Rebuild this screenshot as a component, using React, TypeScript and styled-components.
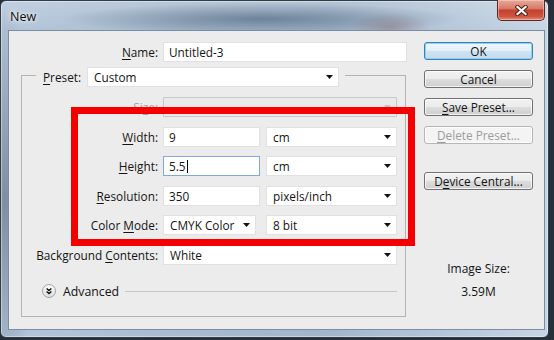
import React from "react";
import styled, { createGlobalStyle } from "styled-components";

const Global = createGlobalStyle`
  html, body { margin: 0; padding: 0; background: #26303b; }
  body {
    width: 554px; height: 340px; overflow: hidden;
    font-family: "Open Sans", "Noto Sans", sans-serif;
    font-size: 11.8px; color: #141414;
  }
`;

const Window = styled.div`
  box-sizing: border-box;
  width: 549px;
  height: 338px;
  border: 1px solid #2f3d4b;
  border-radius: 6px;
  padding: 0 3px 7px 7px;
  display: flex;
  flex-direction: column;
  background:
    radial-gradient(ellipse 200px 16px at 260px 18px, rgba(70, 92, 118, 0.6), transparent),
    radial-gradient(ellipse 40px 14px at 390px 26px, rgba(140, 80, 80, 0.35), transparent),
    radial-gradient(ellipse 30px 200px at 4px 200px, rgba(60, 75, 95, 0.45), transparent),
    linear-gradient(to bottom, rgba(255, 255, 255, 0.18), rgba(255, 255, 255, 0) 30px),
    linear-gradient(to right, #b4c6da, #a7bace 35%, #a2b6cb 60%, #b3c5d8 80%, #c7d5e3);
  box-shadow: inset 0 0 0 1px rgba(255, 255, 255, 0.4);
`;

const TitleBar = styled.div`
  height: 29px;
  display: flex;
  align-items: flex-start;
  justify-content: space-between;
  padding-left: 2px;
`;

const Title = styled.span`
  font-family: "Open Sans", "Noto Sans", sans-serif;
  font-size: 12.5px;
  line-height: 31px;
  color: #0c0c0c;
  text-shadow: 0 0 6px rgba(255, 255, 255, 0.9), 0 0 3px rgba(255, 255, 255, 0.8);
`;

const CloseButton = styled.div`
  box-sizing: border-box;
  width: 48px;
  height: 21px;
  margin-top: -1px;
  border: 1px solid #5d2620;
  border-top: none;
  border-radius: 0 0 5px 5px;
  display: flex;
  align-items: center;
  justify-content: center;
  background: linear-gradient(#e7a999 0%, #d87a6b 42%, #c4412e 52%, #cd5540 82%, #e48f78 100%);
  box-shadow: inset 0 0 0 1px rgba(255, 220, 210, 0.45);
`;

const Client = styled.div`
  position: relative;
  box-sizing: border-box;
  flex: 1;
  border: 1px solid #7b8da2;
  background: #ececec;
  display: flex;
  padding-top: 11px;
`;

const LeftPane = styled.div`
  width: 415px;
  display: flex;
  flex-direction: column;
`;

const RightPane = styled.div`
  width: 109px;
  display: flex;
  flex-direction: column;
`;

const NameRow = styled.div`
  display: grid;
  grid-template-columns: 149px 244px;
  column-gap: 5px;
  height: 20px;
  align-items: center;
`;

const Label = styled.span<{ $disabled?: boolean }>`
  text-align: right;
  white-space: nowrap;
  color: ${(p) => (p.$disabled ? "#a3a3a3" : "#141414")};
`;

const Key = styled.span`
  text-decoration: underline;
  text-underline-offset: 2px;
`;

const TextBox = styled.div<{ $w: number; $focus?: boolean }>`
  box-sizing: border-box;
  width: ${(p) => p.$w}px;
  height: 20px;
  background: #fff;
  border: 1px solid ${(p) => (p.$focus ? "#7fa9d6" : "#e1e1e1")};
  padding-left: 5px;
  display: flex;
  align-items: center;
  white-space: nowrap;
`;

const Caret = styled.span`
  display: inline-block;
  width: 1px;
  height: 13px;
  background: #000;
  margin-left: 1px;
`;

const Select = styled.div<{ $w: number; $disabled?: boolean }>`
  box-sizing: border-box;
  width: ${(p) => p.$w}px;
  height: 20px;
  background: ${(p) => (p.$disabled ? "#eaeaea" : "#fff")};
  border: 1px solid ${(p) => (p.$disabled ? "#c9c9c9" : "#e1e1e1")};
  padding: 0 5px 0 6px;
  display: flex;
  align-items: center;
  justify-content: space-between;
  white-space: nowrap;
`;

const GroupBox = styled.div`
  box-sizing: border-box;
  margin: 13px 0 0 12px;
  width: 385px;
  height: 242px;
  border: 1px solid #b4b4b4;
  display: flex;
  flex-direction: column;
`;

const Legend = styled.div`
  align-self: flex-start;
  margin: -9px 0 0 14px;
  padding: 0 6px 0 7px;
  background: #ececec;
  display: flex;
  align-items: center;
  gap: 5px;
`;

const LegendLabel = styled.span`
  width: 39px;
  white-space: nowrap;
`;

const FieldGrid = styled.div`
  display: grid;
  grid-template-columns: 136px 234px;
  grid-auto-rows: 20px;
  column-gap: 5px;
  row-gap: 9.5px;
  margin-top: 10px;
  align-items: center;
`;

const FieldCell = styled.div`
  display: flex;
  justify-content: space-between;
  align-items: center;
`;

const AdvancedRow = styled.div`
  display: flex;
  align-items: center;
  height: 14px;
  margin: 19.5px 8px 0 20px;
`;

const AdvancedText = styled.span`
  margin-left: 7px;
  font-size: 12.3px;
  white-space: nowrap;
`;

const Rule = styled.div`
  flex: 1;
  height: 1px;
  margin-left: 6px;
  background: #c6c6c6;
`;

const Button = styled.div<{ $default?: boolean; $disabled?: boolean }>`
  box-sizing: border-box;
  height: 18px;
  border-radius: 3px;
  border: 1px solid ${(p) => (p.$default ? "#3c7fb1" : p.$disabled ? "#b3b7ba" : "#707070")};
  display: flex;
  align-items: center;
  justify-content: center;
  white-space: nowrap;
  color: ${(p) => (p.$disabled ? "#9c9c9c" : "#141414")};
  background: ${(p) =>
    p.$default
      ? "linear-gradient(#eef6fc 0%, #e3eff8 50%, #cfe3f2 50%, #c2dbee 100%)"
      : p.$disabled
      ? "#f4f4f4"
      : "linear-gradient(#f2f2f2 0%, #ebebeb 50%, #dddddd 50%, #cfcfcf 100%)"};
  box-shadow: inset 0 0 0 1px ${(p) => (p.$default ? "#8fd3f3" : "rgba(255,255,255,0.75)")};
`;

const ButtonStack = styled.div`
  display: flex;
  flex-direction: column;
  gap: 10px;
`;

const SpacedButton = styled(Button)`
  margin-top: 28px;
`;

const SizeInfo = styled.div`
  margin-top: 67px;
  text-align: center;
  line-height: 23px;
  font-size: 12px;
`;

const Annotation = styled.div`
  position: absolute;
  left: 62px;
  top: 76px;
  width: 344px;
  height: 139px;
  box-sizing: border-box;
  border: 7px solid #f40000;
  pointer-events: none;
`;

const Arrow = () => (
  <svg width="7" height="4" viewBox="0 0 7 4">
    <path d="M0 0H7L3.5 4Z" fill="#111" />
  </svg>
);

const DimArrow = () => (
  <svg width="7" height="4" viewBox="0 0 7 4">
    <path d="M0 0H7L3.5 4Z" fill="#c4c4c4" />
  </svg>
);

const AdvancedIcon = () => (
  <svg width="14" height="14" viewBox="0 0 14 14">
    <defs>
      <linearGradient id="advg" x1="0" y1="0" x2="0" y2="1">
        <stop offset="0" stopColor="#ffffff" />
        <stop offset="1" stopColor="#dcdcdc" />
      </linearGradient>
    </defs>
    <circle cx="7" cy="7" r="6.5" fill="url(#advg)" stroke="#a2a2a2" />
    <path d="M4.6 4.4L7 6.6L9.4 4.4M4.6 7.4L7 9.6L9.4 7.4" fill="none" stroke="#111" strokeWidth="1.3" />
  </svg>
);

const CloseGlyph = () => (
  <svg width="13" height="11" viewBox="0 0 13 11">
    <path d="M2.5 2L10.5 9M10.5 2L2.5 9" stroke="#4a1c16" strokeWidth="4.2" strokeLinecap="square" />
    <path d="M2.5 2L10.5 9M10.5 2L2.5 9" stroke="#ffffff" strokeWidth="2.3" strokeLinecap="square" />
  </svg>
);

export default function App() {
  return (
    <>
      <Global />
      <Window>
        <TitleBar>
          <Title>New</Title>
          <CloseButton>
            <CloseGlyph />
          </CloseButton>
        </TitleBar>
        <Client>
          <LeftPane>
            <NameRow>
              <Label>
                <Key>N</Key>ame:
              </Label>
              <TextBox $w={244}>Untitled-3</TextBox>
            </NameRow>
            <GroupBox>
              <Legend>
                <LegendLabel>
                  <Key>P</Key>reset:
                </LegendLabel>
                <Select $w={252}>
                  Custom
                  <Arrow />
                </Select>
              </Legend>
              <FieldGrid>
                <Label $disabled>
                  Si<Key>z</Key>e:
                </Label>
                <Select $w={234} $disabled>
                  <span />
                  <DimArrow />
                </Select>

                <Label>
                  <Key>W</Key>idth:
                </Label>
                <FieldCell>
                  <TextBox $w={97}>9</TextBox>
                  <Select $w={131}>
                    cm
                    <Arrow />
                  </Select>
                </FieldCell>

                <Label>
                  <Key>H</Key>eight:
                </Label>
                <FieldCell>
                  <TextBox $w={97} $focus>
                    5.5
                    <Caret />
                  </TextBox>
                  <Select $w={131}>
                    cm
                    <Arrow />
                  </Select>
                </FieldCell>

                <Label>
                  <Key>R</Key>esolution:
                </Label>
                <FieldCell>
                  <TextBox $w={97}>350</TextBox>
                  <Select $w={131}>
                    pixels/inch
                    <Arrow />
                  </Select>
                </FieldCell>

                <Label>
                  Color <Key>M</Key>ode:
                </Label>
                <FieldCell>
                  <Select $w={93}>
                    CMYK Color
                    <Arrow />
                  </Select>
                  <Select $w={131}>
                    8 bit
                    <Arrow />
                  </Select>
                </FieldCell>

                <Label>
                  Background <Key>C</Key>ontents:
                </Label>
                <Select $w={234}>
                  White
                  <Arrow />
                </Select>
              </FieldGrid>
              <AdvancedRow>
                <AdvancedIcon />
                <AdvancedText>Advanced</AdvancedText>
                <Rule />
              </AdvancedRow>
            </GroupBox>
          </LeftPane>
          <RightPane>
            <ButtonStack>
              <Button $default>OK</Button>
              <Button>Cancel</Button>
              <Button>
                <Key>S</Key>ave Preset...
              </Button>
              <Button $disabled>
                <Key>D</Key>elete Preset...
              </Button>
            </ButtonStack>
            <SpacedButton>
              D<Key>e</Key>vice Central...
            </SpacedButton>
            <SizeInfo>
              Image Size:
              <br />
              3.59M
            </SizeInfo>
          </RightPane>
          <Annotation />
        </Client>
      </Window>
    </>
  );
}
